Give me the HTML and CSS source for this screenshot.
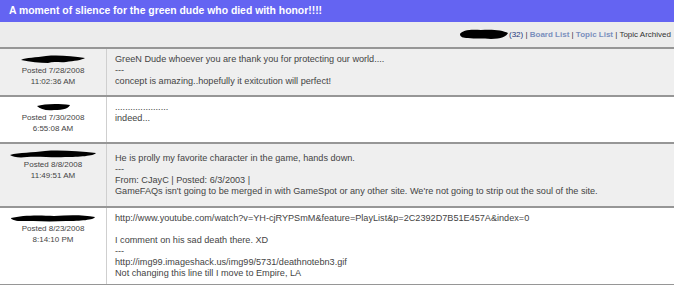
FILE: index.html
```html
<!DOCTYPE html>
<html>
<head>
<meta charset="utf-8">
<link rel="stylesheet" href="styles.css">
</head>
<body>
<div class="board">
  <div class="topic-title">A moment of slience for the green dude who died with honor!!!!</div>
  <div class="nav-bar"><svg class="nav-redact" width="50" height="12" viewBox="0 0 50 12"><path d="M1 6 C3 2 12 1 22 2 C32 1 44 2 49 5 C48 8 42 11 32 11 C24 10 16 11 9 10 C4 10 1 9 1 6Z"/></svg><a class="count" href="#">(32)</a> | <a class="nav-link" href="#">Board List</a> | <a class="nav-link" href="#">Topic List</a> | Topic Archived</div>

  <div class="msg shaded">
    <div class="author">
      <svg class="redact" width="66" height="9" viewBox="0 0 66 9"><path d="M1 5 C6 2 16 3 26 1 C38 0 52 1 65 3 C62 5 54 6 46 7 C40 8 34 6 28 8 C20 8 10 7 1 5Z"/></svg>
      <div>Posted 7/28/2008</div>
      <div>11:02:36 AM</div>
    </div>
    <div class="body">
      <div>GreeN Dude whoever you are thank you for protecting our world....</div>
      <div>---</div>
      <div>concept is amazing..hopefully it exitcution will perfect!</div>
    </div>
  </div>

  <div class="msg">
    <div class="author">
      <svg class="redact" width="35" height="8" viewBox="0 0 35 8"><path d="M1 3 C8 1 20 0 34 2 C33 5 28 7 18 7 C10 8 4 6 1 3Z"/></svg>
      <div>Posted 7/30/2008</div>
      <div>6:55:08 AM</div>
    </div>
    <div class="body">
      <div>.....................</div>
      <div>indeed...</div>
    </div>
  </div>

  <div class="msg shaded">
    <div class="author">
      <svg class="redact" width="88" height="8" viewBox="0 0 88 8"><path d="M1 5 C10 2 24 3 36 1 C50 0 70 1 87 3 C85 6 70 7 56 7 C44 8 30 6 18 7 C10 8 4 7 1 5Z"/></svg>
      <div>Posted 8/8/2008</div>
      <div>11:49:51 AM</div>
    </div>
    <div class="body roomy">
      <div>He is prolly my favorite character in the game, hands down.</div>
      <div>---</div>
      <div>From: CJayC | Posted: 6/3/2003 |</div>
      <div>GameFAQs isn't going to be merged in with GameSpot or any other site. We're not going to strip out the soul of the site.</div>
    </div>
  </div>

  <div class="msg">
    <div class="author">
      <svg class="redact" width="86" height="8" viewBox="0 0 86 8"><path d="M1 4 C12 1 30 1 44 2 C60 1 74 1 85 3 C84 6 70 7 56 7 C40 8 22 7 8 7 C3 6 1 5 1 4Z"/></svg>
      <div>Posted 8/23/2008</div>
      <div>8:14:10 PM</div>
    </div>
    <div class="body">
      <div>http://www.youtube.com/watch?v=YH-cjRYPSmM&amp;feature=PlayList&amp;p=2C2392D7B51E457A&amp;index=0</div>
      <div>&nbsp;</div>
      <div>I comment on his sad death there. XD</div>
      <div>---</div>
      <div>http://img99.imageshack.us/img99/5731/deathnotebn3.gif</div>
      <div>Not changing this line till I move to Empire, LA</div>
    </div>
  </div>
</div>
</body>
</html>
```

FILE: styles.css
```css
html, body {
  margin: 0;
  padding: 0;
  background: #ffffff;
}

.board {
  width: 674px;
  font-family: "Liberation Sans", Arial, sans-serif;
  color: #444444;
}

.topic-title {
  height: 22px;
  line-height: 22px;
  padding-left: 9px;
  background: #6464f2;
  color: #ffffff;
  font-weight: bold;
  font-size: 10.4px;
}

.nav-bar {
  height: 25px;
  line-height: 25px;
  background: #ececec;
  border-bottom: 2px solid #969696;
  padding-right: 3px;
  font-size: 8px;
  color: #333333;
  text-align: right;
  white-space: nowrap;
}

.nav-redact {
  display: inline-block;
  vertical-align: middle;
  fill: #000000;
  margin-top: -1px;
}

.nav-bar a {
  text-decoration: none;
}

.count {
  color: #23367a;
}

.nav-link {
  color: #7a8fbd;
  font-weight: bold;
}

.redact {
  display: block;
  fill: #000000;
}

.msg {
  display: grid;
  grid-template-columns: 107px 1fr;
  border-bottom: 2px solid #969696;
  background: #ffffff;
}

.msg.shaded {
  background: #efefef;
}

.author {
  border-right: 1px solid #cfcfcf;
  text-align: center;
  padding: 5px 0 8px;
  font-size: 8px;
  line-height: 11px;
}

.author .redact {
  margin: 1px auto 1px;
}

.body {
  padding: 5px 8px 5px;
  font-size: 9.15px;
  line-height: 11px;
}

.body.roomy {
  padding-top: 9px;
  padding-bottom: 9px;
}
```
